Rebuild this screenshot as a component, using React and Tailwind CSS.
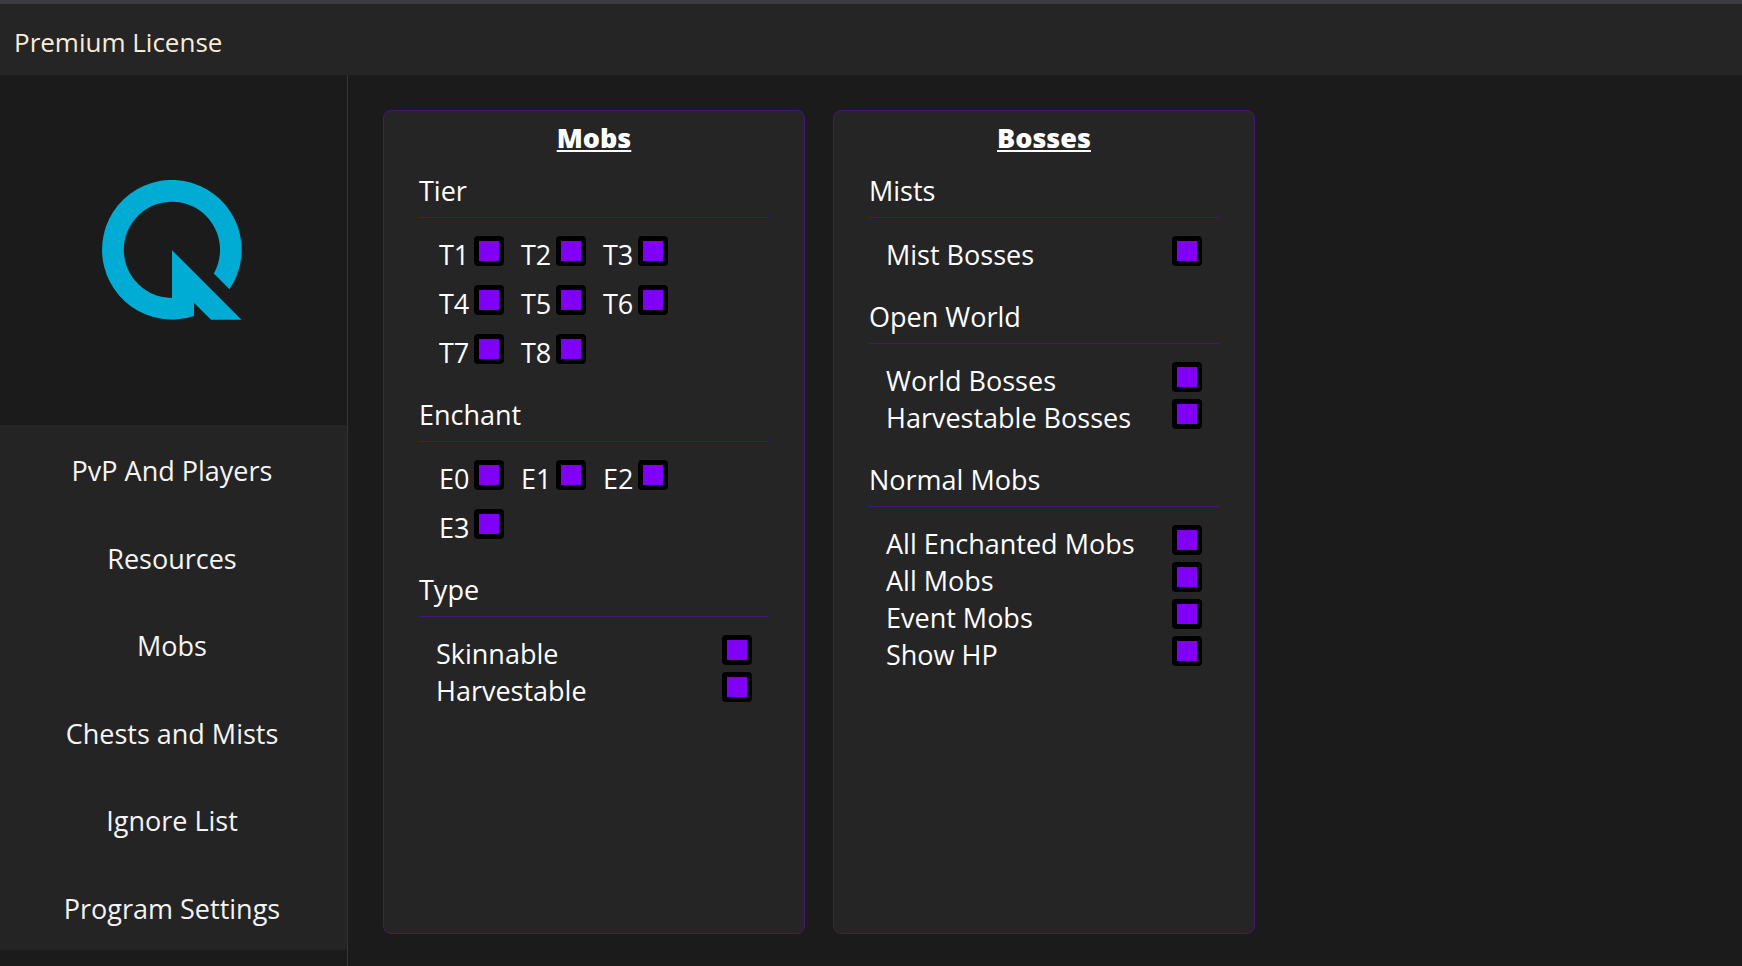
import { useState } from 'react'

const NAV_ITEMS = [
  'PvP And Players',
  'Resources',
  'Mobs',
  'Chests and Mists',
  'Ignore List',
  'Program Settings',
]

function Logo() {
  return (
    <svg className="h-[140px] w-[140px]" viewBox="0 0 418 419" role="img" aria-label="Logo">
      <path
        fill="#00acd3"
        d="M209 210 V353 A144 144 0 1 1 334 280 L381 327 A209 209 0 1 0 275 407 V368 L326 418 H417 Z"
      />
    </svg>
  )
}

function Checkbox({ id }) {
  const [checked, setChecked] = useState(true)

  return (
    <input
      id={id}
      type="checkbox"
      checked={checked}
      onChange={() => setChecked(!checked)}
      className="h-[30px] w-[30px] shrink-0 appearance-none rounded border-5 border-black bg-[#2b2b2b] checked:bg-[#7f00f5]"
    />
  )
}

function Section({ title, children }) {
  return (
    <section>
      <h3 className="border-b border-[#4b1479] pb-2">{title}</h3>
      <div className="pt-[18px]">{children}</div>
    </section>
  )
}

// short labels, three to a row
function CheckGrid({ items }) {
  return (
    <ul className="grid grid-cols-[repeat(3,82px)] gap-y-3 pl-5">
      {items.map((item) => (
        <li key={item} className="flex items-start">
          <label htmlFor={item} className="w-[35px]">{item}</label>
          <Checkbox id={item} />
        </li>
      ))}
    </ul>
  )
}

function CheckList({ items }) {
  return (
    <ul className="px-[17px]">
      {items.map((item) => (
        <li key={item} className="flex items-start justify-between">
          <label htmlFor={item}>{item}</label>
          <Checkbox id={item} />
        </li>
      ))}
    </ul>
  )
}

function Card({ title, children }) {
  return (
    <article className="w-[422px] rounded-lg border border-[#4b1479] bg-[#252525] px-[35px] pt-2">
      <h2 className="mb-4 text-center font-black underline decoration-2 underline-offset-2">{title}</h2>
      <div className="flex flex-col gap-[25px]">{children}</div>
    </article>
  )
}

export default function App() {
  return (
    <div className="flex min-h-screen flex-col bg-[#1b1b1b] font-['Open_Sans','Noto_Sans',sans-serif] text-[27px] leading-[37px] text-white">
      <header className="border-t-4 border-[#3c3b41] bg-[#252525] px-[14px] pt-5 pb-[14px] text-[26px] text-[#faebd7]">
        Premium License
      </header>

      <div className="flex flex-1">
        <aside className="w-[348px] shrink-0 border-r border-[#5f0aa0]">
          <div className="flex h-[350px] items-center justify-center pr-[3px]">
            <Logo />
          </div>
          <nav className="grid h-[525px] grid-rows-6 bg-[#242424] text-[#f5f5f5]">
            {NAV_ITEMS.map((item) => (
              <button key={item} type="button" className="pt-1 pr-[3px] hover:bg-[#2e2e2e]">
                {item}
              </button>
            ))}
          </nav>
        </aside>

        <main className="flex flex-1 gap-7 px-[35px] pt-[35px] pb-8">
          <Card title="Mobs">
            <Section title="Tier">
              <CheckGrid items={['T1', 'T2', 'T3', 'T4', 'T5', 'T6', 'T7', 'T8']} />
            </Section>
            <Section title="Enchant">
              <CheckGrid items={['E0', 'E1', 'E2', 'E3']} />
            </Section>
            <Section title="Type">
              <CheckList items={['Skinnable', 'Harvestable']} />
            </Section>
          </Card>

          <Card title="Bosses">
            <Section title="Mists">
              <CheckList items={['Mist Bosses']} />
            </Section>
            <Section title="Open World">
              <CheckList items={['World Bosses', 'Harvestable Bosses']} />
            </Section>
            <Section title="Normal Mobs">
              <CheckList items={['All Enchanted Mobs', 'All Mobs', 'Event Mobs', 'Show HP']} />
            </Section>
          </Card>
        </main>
      </div>
    </div>
  )
}
